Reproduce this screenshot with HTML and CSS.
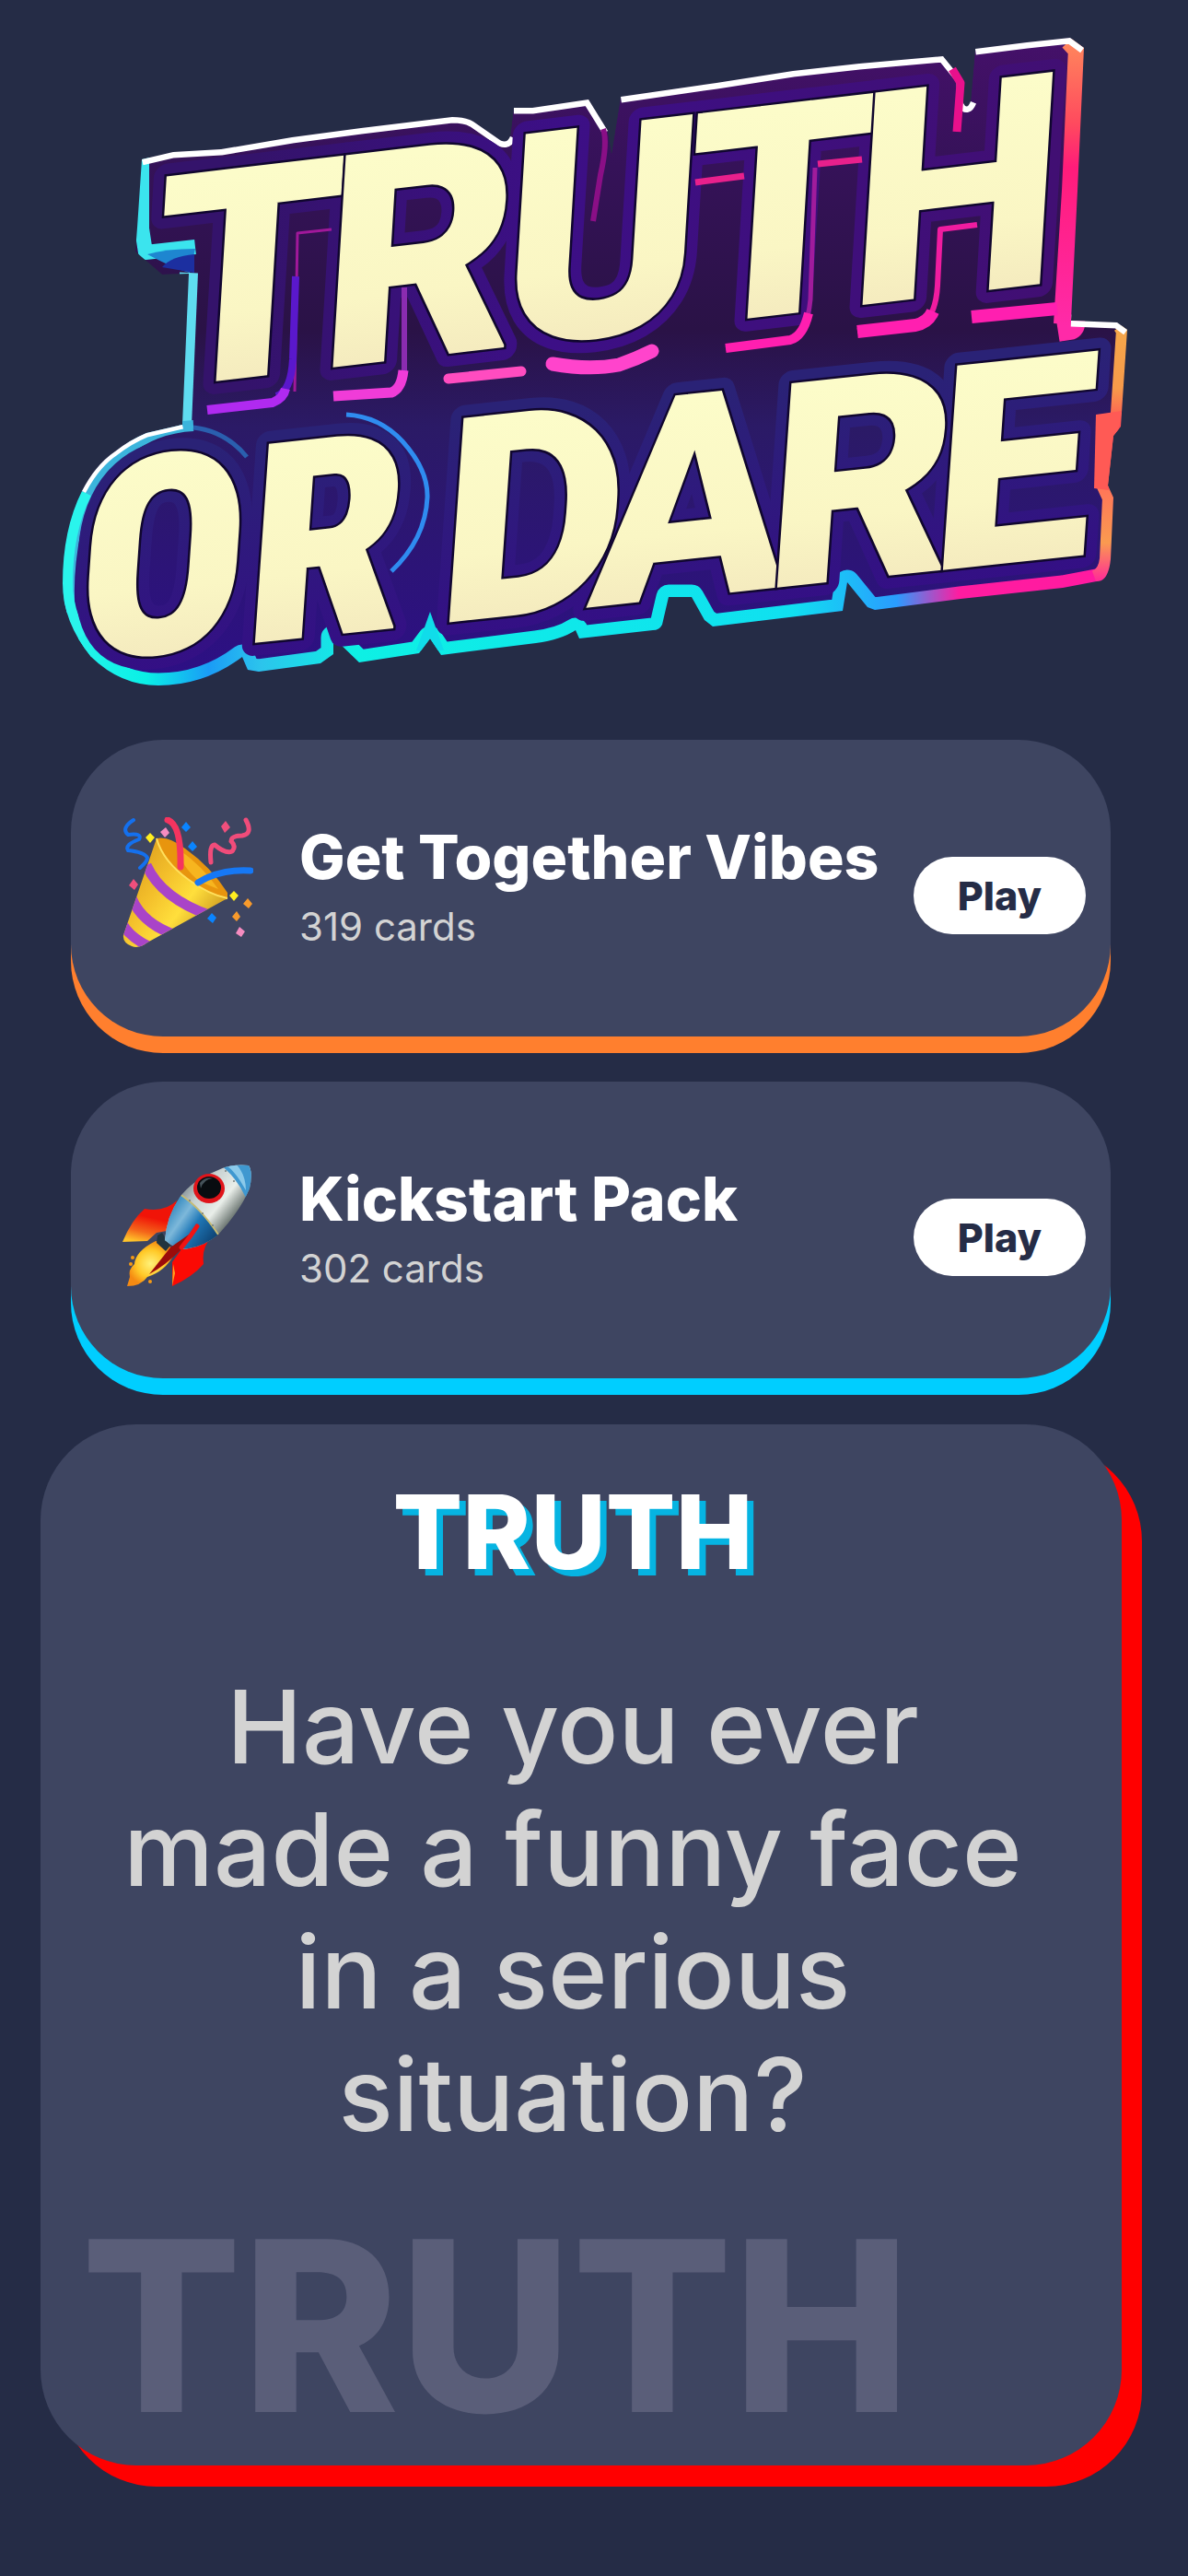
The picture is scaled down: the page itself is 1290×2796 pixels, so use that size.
FILE: index.html
```html
<!DOCTYPE html>
<html lang="en">
<head>
<meta charset="utf-8">
<meta name="viewport" content="width=device-width, initial-scale=1">
<title>Truth or Dare</title>
<link rel="stylesheet" href="styles.css">
</head>
<body>
<header class="brand">
  <svg class="logo" viewBox="0 0 1290 780" role="img" aria-label="Truth or Dare">
    <defs>
      <linearGradient id="cream" x1="0" y1="0" x2="0" y2="1">
        <stop offset="0.2" stop-color="#fcfcc9"/><stop offset="0.6" stop-color="#faf6c4"/><stop offset="0.85" stop-color="#f3e8bd"/>
      </linearGradient>
      <linearGradient id="body" x1="0" y1="0" x2="0" y2="1">
        <stop offset="0" stop-color="#45106a"/><stop offset="0.2" stop-color="#351258"/><stop offset="0.45" stop-color="#2a1246"/><stop offset="0.6" stop-color="#2b1a66"/><stop offset="1" stop-color="#2d0f86"/>
      </linearGradient>
      <linearGradient id="halo" gradientUnits="userSpaceOnUse" x1="100" y1="0" x2="1200" y2="0">
        <stop offset="0" stop-color="#34136b"/><stop offset="0.3" stop-color="#3c0f86"/><stop offset="1" stop-color="#430f6b"/>
      </linearGradient>
      <linearGradient id="halo-low" gradientUnits="userSpaceOnUse" x1="0" y1="-220" x2="0" y2="20">
        <stop offset="0" stop-color="#2a2276"/><stop offset="1" stop-color="#340f85"/>
      </linearGradient>
      <linearGradient id="right-edge" gradientUnits="userSpaceOnUse" x1="0" y1="40" x2="0" y2="354">
        <stop offset="0" stop-color="#ff8a5c"/><stop offset="0.3" stop-color="#ff4a5e"/><stop offset="0.45" stop-color="#ff1c7a"/><stop offset="1" stop-color="#ff2aa8"/>
      </linearGradient>
      <linearGradient id="low-right-edge" gradientUnits="userSpaceOnUse" x1="0" y1="352" x2="0" y2="631">
        <stop offset="0" stop-color="#f6a84a"/><stop offset="0.25" stop-color="#f79a4a"/><stop offset="0.42" stop-color="#ff4458"/><stop offset="0.65" stop-color="#ff7858"/><stop offset="0.85" stop-color="#fa9a50"/><stop offset="1" stop-color="#ff2a98"/>
      </linearGradient>
      <linearGradient id="bottom-edge" gradientUnits="userSpaceOnUse" x1="68" y1="0" x2="1200" y2="0">
        <stop offset="0" stop-color="#2af4ec"/><stop offset="0.08" stop-color="#0af0e6"/><stop offset="0.14" stop-color="#1a9cf6"/><stop offset="0.19" stop-color="#2cc4ec"/><stop offset="0.28" stop-color="#0ef0e4"/><stop offset="0.7" stop-color="#10e0f0"/><stop offset="0.8" stop-color="#2a9cff"/><stop offset="0.86" stop-color="#ff1ca0"/><stop offset="1" stop-color="#ff1aa0"/>
      </linearGradient>
      <clipPath id="badge">
        <path id="outline" d="M154 173 188 165 240 162 317 149 392 139 491 127Q506 127 514 132L540 150Q550 158 554 148L558 117 578 117 639 108 660 142 664 167 674 105 778 90 861 77 933 69 1024 61 1045 87 1046 112Q1050 120 1054 110L1059 53 1115 46 1162 41 1177 52 1170 207 1163 348 1213 350 1224 358 1217 463 1209 473 1203 527 1209 540 1206 607Q1204 626 1196 630L1154 638 1043 650 950 662 942 659 920 632 915 663 774 680 765 673 751 648 726 648 719 678Q716 684 709 684L629 693 625 684Q610 694 582 698L479 711 467 693 455 709 390 719 362 692 362 710 348 720 281 729 269 727 263 713Q222 744 172 744 131 744 99 713 68 675 68 633 68 575 89 533 104 504 125 490 140 478 159 470L198 461 205 297 176 298 147 273 149 247Z"/>
      </clipPath>
    </defs>
    <g clip-path="url(#badge)">
      <use href="#outline" fill="url(#body)"/>
      <g fill="none" stroke-linejoin="round">
        <path d="M154 170V248L158 274 212 268" stroke="#3be4ee" stroke-width="16"/>
        <path d="M160 276Q190 292 206 296L212 270Q180 270 160 276Z" fill="#1e86d0"/>
        <path d="M176 290Q186 278 211 276V296Z" fill="#1c2fa0"/>
        <path d="M205 296 198 462" stroke="#5fdcf0" stroke-width="20"/>
        <path d="M210 462Q168 464 136 490 96 522 82 575 72 625 76 665" stroke="#3bb4dc" stroke-width="12"/>
        <path d="M210 464Q245 468 268 496" stroke="#2a5fae" stroke-width="5"/>
        <path d="M89 533Q68 575 68 633 68 675 99 713" stroke="#2af4ec" stroke-width="22"/>
        <path d="M85 693Q98 713 104 717 131 744 172 744 222 744 263 713L269 727 281 729 348 720 362 710V692L390 719 455 709 467 693 479 711 582 698Q610 694 625 684L629 693 709 684Q716 684 719 678L726 648H751L765 673 774 680 915 663 920 632 942 659 950 662 1043 650 1154 638 1196 630" stroke="url(#bottom-edge)" stroke-width="27"/>
        <path d="M467 664 452 706H482Z" fill="#10dcea"/>
        <path d="M1166 40 1177 52 1170 207 1161 352 1148 354" stroke="url(#right-edge)" stroke-width="34"/>
        <path d="M1220 352 1224 358 1217 463 1209 473 1203 527 1209 540 1206 607Q1204 626 1190 631" stroke="url(#low-right-edge)" stroke-width="24"/>
        <path d="M1190 450 1218 446 1204 532 1188 530Z" fill="#ff5a55"/>
        <path d="M154 173 188 165 240 162 317 149 392 139 491 127Q506 127 514 132L540 150Q550 158 554 148M558 117 578 117 639 108 660 142M674 105 778 90 861 77 933 69 1024 61 1045 87 1046 112Q1050 120 1054 110M1059 53 1115 46 1162 41 1177 52M1163 348 1213 350 1224 358" stroke="#fff" stroke-width="13"/>
        <path d="M89 533Q104 504 125 490 140 478 159 470L198 461" stroke="#fff" stroke-width="9"/>
      </g>
    </g>
    <g fill="none" stroke-width="28" stroke-linejoin="round">
      <use href="#word-truth" stroke="url(#halo)"/>
      <use href="#word-ordare" stroke="url(#halo-low)"/>
    </g>
    <g fill="none" stroke-linejoin="round">
      <path d="M320 425 323 253 360 249" stroke="#a0189a" stroke-width="3"/>
      <path d="M300 430Q316 425 318 390L321 300" stroke="#5a18cc" stroke-width="8"/>
      <path d="M225 445 296 437Q308 432 310 422" stroke="#b02af0" stroke-width="10"/>
      <path d="M439 312V405" stroke="#8a2cb0" stroke-width="6"/>
      <path d="M362 430 425 426Q436 422 438 402" stroke="#f03cd8" stroke-width="11"/>
      <path d="M487 411 566 403" stroke="#ff4cc0" stroke-width="11" stroke-linecap="round"/>
      <path d="M600 395Q640 402 672 396 690 390 708 381" stroke="#ff44cc" stroke-width="15" stroke-linecap="round"/>
      <path d="M755 198 808 191M888 178 936 173" stroke="#e8208c" stroke-width="7"/>
      <path d="M788 378 858 369Q876 364 880 325L885 182" stroke="#a01c9c" stroke-width="5"/>
      <path d="M788 378 858 369Q872 365 878 340" stroke="#ff1fb0" stroke-width="10"/>
      <path d="M931 359 1000 351Q1016 344 1018 310L1021 249 1061 244" stroke="#f01ca0" stroke-width="6"/>
      <path d="M931 360 994 353Q1008 350 1013 338" stroke="#ff1fb0" stroke-width="14"/>
      <path d="M1055 344 1148 335" stroke="#ff1fb0" stroke-width="14"/>
      <path d="M1034 75 1043 90 1039 143" stroke="#e8108c" stroke-width="9"/>
      <path d="M655 140Q660 155 652 190L644 240" stroke="#8a0f86" stroke-width="6"/>
      <path d="M376 450Q412 452 437 479 465 510 464 540 462 585 425 620" stroke="#2f8cf0" stroke-width="5"/>
    </g>
    <g class="logo-face">
      <text id="word-truth" class="logo-word" font-size="324" transform="matrix(1 -0.118 -0.061 1 165 422)" x="-4 179 375 573 754">TRUTH</text>
      <text id="word-ordare" class="logo-word" transform="matrix(1 -0.106 -0.07 1 77 719)"><tspan class="logo-narrow" font-size="304" x="2 185">OR</tspan> <tspan font-size="312" x="394 560 750 930">DARE</tspan></text>
    </g>
  </svg>
</header>

<main class="content">
  <section class="packs" aria-label="Card packs">
    <article class="pack pack-party">
      <svg class="pack-icon" viewBox="0 0 142 142" aria-hidden="true">
        <defs>
          <linearGradient id="cone" x1="0" y1="0.3" x2="0.8" y2="0.9">
            <stop offset="0" stop-color="#d99a1c"/><stop offset="0.35" stop-color="#f3bf2b"/><stop offset="0.6" stop-color="#ffdf3c"/><stop offset="1" stop-color="#b57712"/>
          </linearGradient>
          <clipPath id="cone-clip"><path d="M37 23Q46 50 72 68 94 84 114 88L27 136Q18 143 10 140 0 136 1 128Z"/></clipPath>
        </defs>
        <path d="M37 23Q50 20 68 34 96 54 114 82V89Q92 92 66 68 42 46 37 23Z" fill="#e8950e"/>
        <path d="M60 34Q88 54 104 78L84 70Q64 54 60 34Z" fill="#f7b51f"/>
        <g clip-path="url(#cone-clip)">
          <path d="M0 0H142V142H0Z" fill="url(#cone)"/>
          <g fill="none" stroke="#a944c8" stroke-width="11"><path d="M26 52Q42 88 96 107"/><path d="M10 88Q22 116 58 128"/><path d="M0 116Q8 130 28 140"/></g>
        </g>
        <path d="M37 23Q44 48 72 68 94 84 114 88" fill="none" stroke="#ffe05c" stroke-width="2"/>
        <g fill="none" stroke-linecap="round">
          <path d="M49 3Q64 8 63 54" stroke="#f5345f" stroke-width="7"/>
          <path d="M82 71Q106 56 139 58" stroke="#1678f5" stroke-width="7"/>
          <path d="M12 3Q-2 12 6 19 22 17 18 24 2 30 6 36 24 38 27 44 27 48 19 55" stroke="#1470ee" stroke-width="4"/>
          <path d="M96 49Q94 30 100 30 112 40 119 37 124 32 118 26 118 20 130 20 142 18 134 3" stroke="#f04c7a" stroke-width="5"/>
        </g>
        <g fill="#0a84ff"><path d="m69 5 5 6-5 5-5-5zM76 26l5 6-5 5-5-5zM97 104l5 5-4 6-6-5z"/></g>
        <g fill="#ffef1f"><path d="m30 17 5 5-5 6-5-6zM121 80l5 5-5 6-5-6z"/></g>
        <g fill="#ef4f7c"><path d="m112 4 5 7-6 6-4-7zM12 67l5 6-4 6-6-5z"/></g>
        <g fill="#f58cc0"><path d="m47 11 4 6-5 5-5-6zM127 119l6 5-4 6-6-4z"/></g>
        <g fill="#f79a2c"><path d="m136 88 5 6-4 5-6-5zM124 102l4 6-4 5-5-5z"/></g>
      </svg>
      <div class="pack-text">
        <h2 class="pack-title">Get Together Vibes</h2>
        <p class="pack-count">319 cards</p>
      </div>
      <button class="play" type="button">Play</button>
    </article>

    <article class="pack pack-kickstart">
      <svg class="pack-icon" viewBox="0 0 142 142" aria-hidden="true">
        <defs>
          <linearGradient id="steel" gradientUnits="userSpaceOnUse" x1="70" y1="20" x2="122" y2="62">
            <stop offset="0" stop-color="#7f8b90"/><stop offset="0.3" stop-color="#c9d2d2"/><stop offset="0.65" stop-color="#e9eee9"/><stop offset="1" stop-color="#596460"/>
          </linearGradient>
          <linearGradient id="blue" gradientUnits="userSpaceOnUse" x1="48" y1="52" x2="98" y2="88">
            <stop offset="0" stop-color="#2f86bd"/><stop offset="0.3" stop-color="#7db8da"/><stop offset="0.55" stop-color="#1f78b8"/><stop offset="1" stop-color="#0d4070"/>
          </linearGradient>
          <linearGradient id="fin" x1="0.6" y1="0" x2="0.3" y2="1">
            <stop offset="0.4" stop-color="#f01408"/><stop offset="0.75" stop-color="#f4661a"/><stop offset="1" stop-color="#ffc42a"/>
          </linearGradient>
          <radialGradient id="flame"><stop offset="0" stop-color="#fff27a"/><stop offset="0.6" stop-color="#ffc928"/><stop offset="1" stop-color="#f58a12"/></radialGradient>
          <clipPath id="hull"><path d="M137 3Q118 1 104 8 74 20 62 38 48 58 46 84 60 96 72 93 90 90 104 78 128 52 138 28 142 10 137 3Z"/></clipPath>
        </defs>
        <g transform="translate(0 4)">
          <path d="M59 41Q46 54 24 50 10 62 0 86L27 85 37 76 48 74Z" fill="url(#fin)"/>
          <path d="M93 85Q86 96 88 110 76 124 54 134V108L64 94Z" fill="#fb0a04"/>
          <path d="m54 134 3-14-2-10z" fill="#ffa51e"/>
          <path d="M36 85Q14 96 13 110 6 116 8 124L5 134Q20 134 27 124 46 118 56 100L50 88Z" fill="url(#flame)"/>
          <g fill="#f59a14"><circle cx="11" cy="103" r="2"/><circle cx="30" cy="129" r="2"/><circle cx="9" cy="110" r="2"/></g>
          <path d="m38 79 5-3 9 14-5 6-10-9z" fill="#21343f"/>
          <g clip-path="url(#hull)">
            <path d="M40 0H142V100H40Z" fill="url(#steel)"/>
            <path d="M62 34Q84 48 104 78L90 100H40V60Z" fill="url(#blue)"/>
            <path d="M62 34Q84 48 104 78" fill="none" stroke="#c8bb72" stroke-width="2"/>
            <path d="M107 3Q124 16 134 38H142V0H107Z" fill="#3f98d0"/>
            <path d="M122 0Q134 12 134 30L128 20Q120 8 114 4Z" fill="#8ccaea"/>
          </g>
          <ellipse cx="94" cy="28" rx="17" ry="16" fill="#e0141a"/>
          <ellipse cx="94" cy="27" rx="13" ry="12" fill="#080c10"/>
          <path d="M84 22Q90 15 98 17 88 18 85 28Z" fill="#45525a"/>
          <path d="M72 78 52 92 29 121Q46 112 64 94Z" fill="#9c0c0a"/>
          <path d="M81 69Q74 80 64 92" fill="none" stroke="#f01414" stroke-width="5" stroke-linecap="round"/>
          <g fill="#737c7c"><circle cx="121" cy="20" r="1"/><circle cx="112" cy="9" r="1"/><circle cx="73" cy="41" r="1"/><circle cx="87" cy="55" r="1"/><circle cx="98" cy="68" r="1"/></g>
        </g>
      </svg>
      <div class="pack-text">
        <h2 class="pack-title">Kickstart Pack</h2>
        <p class="pack-count">302 cards</p>
      </div>
      <button class="play" type="button">Play</button>
    </article>
  </section>

  <section class="question-card">
    <h1 class="question-kind">TRUTH</h1>
    <p class="question">Have you ever made a funny face in a serious situation?</p>
    <div class="watermark" aria-hidden="true">TRUTH</div>
  </section>
</main>
</body>
</html>
```
FILE: styles.css
```css
:root {
  --page: #252c46;
  --card: #3e4561;
  --muted: #d3d3d3;
}

* {
  box-sizing: border-box;
}

body {
  margin: 0;
  background: var(--page);
  color: #fff;
  font-family: Inter, "Liberation Sans", sans-serif;
}

h1, h2, p {
  margin: 0;
}

.logo {
  display: block;
  width: 100%;
}

.logo-face {
  fill: url(#cream);
  stroke: #10062e;
  stroke-width: 5px;
}

.logo-word {
  font-family: Roboto, "Liberation Sans", sans-serif;
  font-weight: 900;
  paint-order: stroke;
}

.logo-narrow {
  font-family: "Roboto Condensed", Roboto, sans-serif;
}

.content {
  padding: 23px 72px 96px 44px;
}

.packs {
  display: grid;
  gap: 49px;
  margin: 0 12px 50px 33px;
}

.pack {
  display: flex;
  align-items: center;
  gap: 50px;
  min-height: 322px;
  padding: 0 27px 0 56px;
  border-radius: 100px;
  background: var(--card);
}

.pack-party {
  box-shadow: 0 18px 0 #ff7f2e;
}

.pack-kickstart {
  box-shadow: 0 18px 0 #00ceff;
}

.pack-icon {
  flex: none;
  width: 142px;
  margin-bottom: 12px;
}

.pack-text {
  display: grid;
  flex: 1;
  gap: 12px;
  min-width: 0;
  white-space: nowrap;
}

.pack-title {
  font-size: 66px;
  font-weight: 800;
  line-height: 72px;
}

.pack-count {
  color: var(--muted);
  font-size: 42px;
  line-height: 56px;
}

.play {
  flex: none;
  height: 84px;
  margin: 16px 0 0 -50px;
  padding: 0 48px;
  border: 0;
  border-radius: 42px;
  background: #fff;
  color: var(--page);
  font: 800 43px/84px Inter, "Liberation Sans", sans-serif;
}

.question-card {
  padding: 50px 0 24px;
  border-radius: 104px;
  background: var(--card);
  box-shadow: 22px 23px 0 #f00;
}

.question-kind {
  padding-right: 18px;
  font-size: 112px;
  font-weight: 800;
  line-height: 132px;
  text-align: center;
  text-shadow: 7px 7px 0 #06b4e2;
}

.question {
  margin: 80px 0 56px;
  padding: 0 78px 0 60px;
  color: var(--muted);
  font-size: 110px;
  font-weight: 500;
  line-height: 133px;
  text-align: center;
}

.watermark {
  padding-left: 44px;
  color: #5a5e79;
  font-size: 258px;
  font-weight: 800;
  line-height: 256px;
}
```
